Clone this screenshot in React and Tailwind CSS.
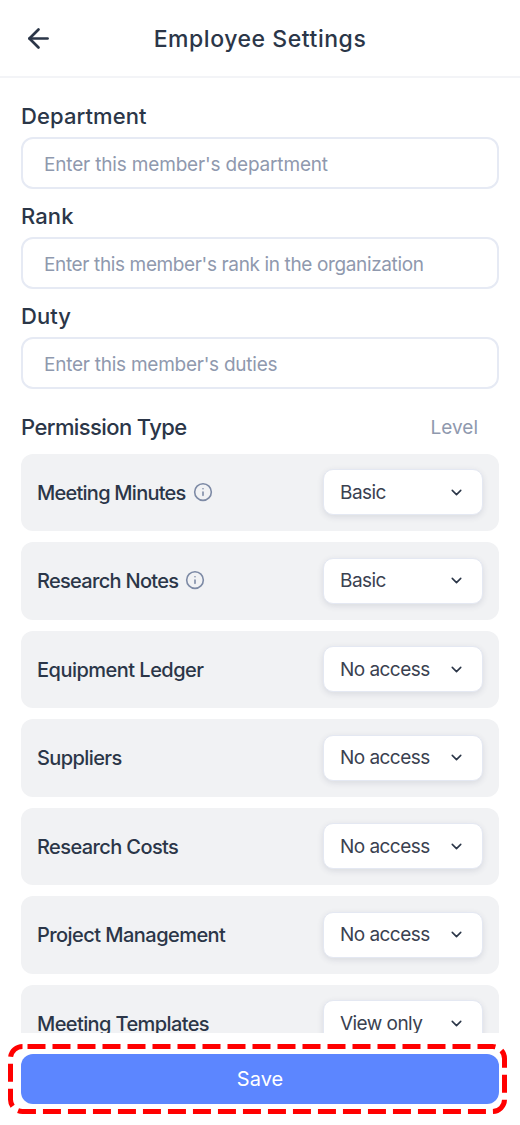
import React from "react";
import { ArrowLeft, ChevronDown, Info } from "lucide-react";

const fields = [
  { label: "Department", placeholder: "Enter this member's department", track: "tracking-[-0.17px]" },
  { label: "Rank", placeholder: "Enter this member's rank in the organization", track: "tracking-[-0.37px]" },
  { label: "Duty", placeholder: "Enter this member's duties", track: "tracking-[-0.25px]" },
];

const permissions = [
  { name: "Meeting Minutes", level: "Basic", info: true, track: "tracking-[-0.75px]" },
  { name: "Research Notes", level: "Basic", info: true, track: "tracking-[-0.7px]" },
  { name: "Equipment Ledger", level: "No access", track: "tracking-[-0.52px]" },
  { name: "Suppliers", level: "No access", track: "tracking-[-0.6px]" },
  { name: "Research Costs", level: "No access", track: "tracking-[-0.6px]" },
  { name: "Project Management", level: "No access", track: "tracking-[-0.55px]" },
  { name: "Meeting Templates", level: "View only", track: "tracking-[-0.6px]" },
];

const App = () => {
  return (
    <div className="h-[1125px] w-[520px] flex flex-col overflow-hidden bg-white font-['Inter',sans-serif] text-[#2b3648]">
      <header className="h-[78px] shrink-0 flex items-center relative border-b-2 border-[#f3f4f7]">
        <ArrowLeft className="ml-[23px] w-[31px] h-[31px] text-[#2b3648]" strokeWidth={2.1} />
        <h1 className="absolute inset-x-0 top-[21px] text-center text-[23px] leading-[36px] font-medium tracking-[0.55px]">Employee Settings</h1>
      </header>

      <main className="flex-1 overflow-hidden px-[21px] pt-[21px]">
        {fields.map((f) => (
          <div key={f.label} className="h-[100px]">
            <label className="block h-[38px] text-[22px] leading-[34px] font-medium tracking-[0.1px]">{f.label}</label>
            <input
              readOnly
              placeholder={f.placeholder}
              className={`w-full h-[52px] pl-[21px] pr-[22px] pt-[2px] rounded-xl border-2 border-[#e6eaf4] text-[19px] placeholder:text-[#8f99ae] outline-none ${f.track}`}
            />
          </div>
        ))}

        <div className="flex justify-between items-center h-[36px] mt-[10px] mb-[8.5px]">
          <span className="text-[22px] font-medium tracking-[-0.6px]">Permission Type</span>
          <span className="mr-[21px] mt-[3px] text-[19px] text-[#8f99ae]">Level</span>
        </div>

        <div className="flex flex-col gap-[11px]">
          {permissions.map((p) => (
            <div key={p.name} className="h-[77.5px] shrink-0 flex items-center justify-between pl-[16px] pr-[16px] rounded-xl bg-[#f1f2f4]">
              <div className="flex items-center gap-[7px]">
                <span className={`mt-[1px] text-[20px] font-medium ${p.track}`}>{p.name}</span>
                {p.info && <Info className="w-[20px] h-[20px] -mt-[1px] text-[#7d8aa5]" strokeWidth={1.9} />}
              </div>
              <div className="w-[160px] h-[46px] flex items-center justify-between pl-[16px] pr-[17px] rounded-[10px] border border-[#e4e8f2] bg-white shadow-[0_2px_6px_rgba(40,50,80,0.12)]">
                <span className="mt-[1px] text-[19px] tracking-[-0.55px] text-[#3a4150]">{p.level}</span>
                <ChevronDown className="w-[17px] h-[17px] text-[#2b3648]" strokeWidth={2.2} />
              </div>
            </div>
          ))}
        </div>
      </main>

      <footer className="h-[92px] shrink-0 relative bg-white px-[21px] pt-[21px]">
        <button className="w-full h-[50px] rounded-xl bg-[#5c86ff] text-white text-[20px] font-normal">Save</button>
        <svg className="absolute left-[6px] top-[9px]" width="503" height="74" fill="none">
          <rect x="4.5" y="4.5" width="494" height="65" rx="12" stroke="#ff0000" strokeWidth="5" strokeDasharray="18 7" strokeDashoffset="-5" />
        </svg>
      </footer>
    </div>
  );
};

export default App;
